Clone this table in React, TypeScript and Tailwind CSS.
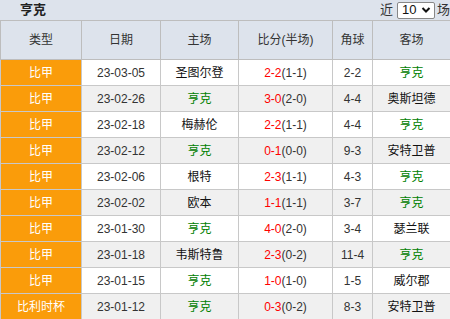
import React from 'react';

type Row = {
  league: string;
  date: string;
  home: string;
  score: string;
  half: string;
  corner: string;
  away: string;
};

const rows: Row[] = [
  { league: '比甲', date: '23-03-05', home: '圣图尔登', score: '2-2', half: '(1-1)', corner: '2-2', away: '亨克' },
  { league: '比甲', date: '23-02-26', home: '亨克', score: '3-0', half: '(2-0)', corner: '4-4', away: '奥斯坦德' },
  { league: '比甲', date: '23-02-18', home: '梅赫伦', score: '2-2', half: '(1-1)', corner: '4-4', away: '亨克' },
  { league: '比甲', date: '23-02-12', home: '亨克', score: '0-1', half: '(0-0)', corner: '9-3', away: '安特卫普' },
  { league: '比甲', date: '23-02-06', home: '根特', score: '2-3', half: '(1-1)', corner: '4-3', away: '亨克' },
  { league: '比甲', date: '23-02-02', home: '欧本', score: '1-1', half: '(1-1)', corner: '3-7', away: '亨克' },
  { league: '比甲', date: '23-01-30', home: '亨克', score: '4-0', half: '(2-0)', corner: '3-4', away: '瑟兰联' },
  { league: '比甲', date: '23-01-18', home: '韦斯特鲁', score: '2-3', half: '(0-2)', corner: '11-4', away: '亨克' },
  { league: '比甲', date: '23-01-15', home: '亨克', score: '1-0', half: '(1-0)', corner: '1-5', away: '威尔郡' },
  { league: '比利时杯', date: '23-01-12', home: '亨克', score: '0-3', half: '(0-2)', corner: '8-3', away: '安特卫普' },
];

const Team = ({ name }: { name: string }) => (
  <span className={name === '亨克' ? 'text-[#008000]' : 'text-[#111]'}>{name}</span>
);

const App: React.FC = () => {
  return (
    <div
      className="w-[450px] h-[319px] overflow-hidden bg-[#dde3ec] text-[12px] text-[#333]"
      style={{ fontFamily: '"Liberation Sans", "Noto Sans CJK SC", sans-serif' }}
    >
      {/* title bar */}
      <div className="h-[20px] flex items-center justify-between">
        <span className="pl-[20px] font-bold text-[#222] text-[13px]">亨克</span>
        <div className="flex items-center">
          <span className="text-[13px] mr-[4px]">近</span>
          <div className="w-[38px] h-[17px] bg-white border border-[#888] rounded-[2px] flex items-center justify-between pl-[4px] pr-[3px] text-[13px] text-[#111]">
            10
            <svg width="10" height="8" viewBox="0 0 10 8">
              <path d="M1.5 2 L5 5.5 L8.5 2" stroke="#111" strokeWidth="2" fill="none" />
            </svg>
          </div>
          <span className="text-[13px] ml-[2px]">场</span>
        </div>
      </div>

      <table className="w-[450px] table-fixed border-collapse">
        <colgroup>
          <col className="w-[81px]" />
          <col className="w-[79px]" />
          <col className="w-[78px]" />
          <col className="w-[94px]" />
          <col className="w-[40px]" />
          <col className="w-[78px]" />
        </colgroup>
        <thead>
          <tr className="h-[39px] bg-[#dde3ec]">
            {['类型', '日期', '主场', '比分(半场)', '角球', '客场'].map(h => (
              <th key={h} className="border border-[#bdbdbd] font-normal text-[#333] text-center p-0">
                {h}
              </th>
            ))}
          </tr>
        </thead>
        <tbody>
          {rows.map((r, i) => (
            <tr key={r.date} className={`h-[26px] ${i % 2 === 1 ? 'bg-[#f0f0f0]' : 'bg-white'}`}>
              <td className="border border-[#c8c8c8] bg-[#fa9c0a] text-white text-center p-0">{r.league}</td>
              <td className="border border-[#c8c8c8] text-center p-0">{r.date}</td>
              <td className="border border-[#c8c8c8] text-center p-0"><Team name={r.home} /></td>
              <td className="border border-[#c8c8c8] text-center p-0">
                <span className="text-[#ff0000]">{r.score}</span>
                {r.half}
              </td>
              <td className="border border-[#c8c8c8] text-center p-0">{r.corner}</td>
              <td className="border border-[#c8c8c8] text-center p-0"><Team name={r.away} /></td>
            </tr>
          ))}
        </tbody>
      </table>
    </div>
  );
};

export default App;
